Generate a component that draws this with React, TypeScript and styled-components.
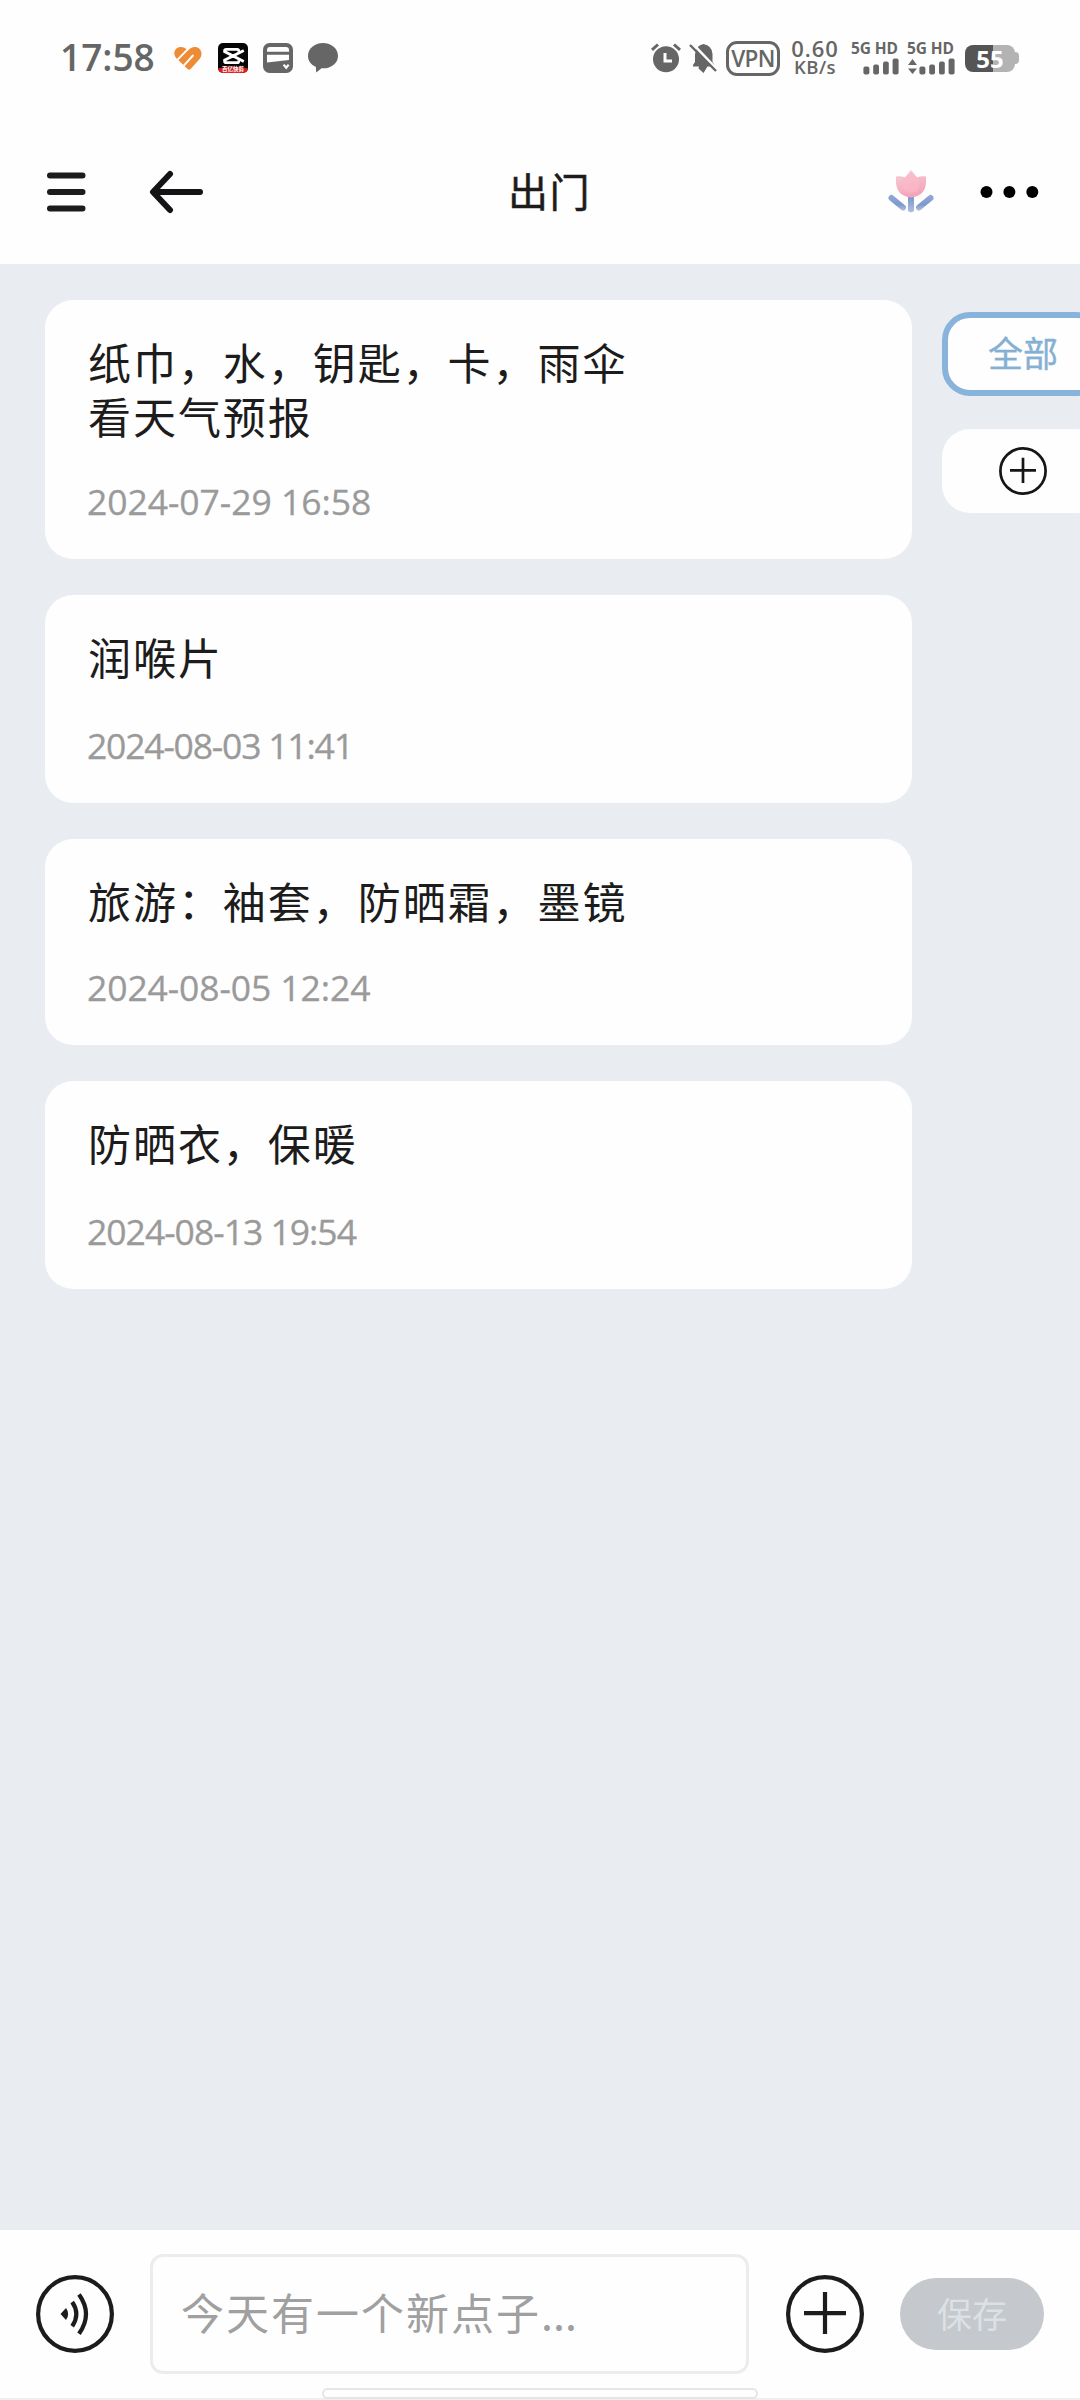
import React from 'react';
import styled, { createGlobalStyle } from 'styled-components';

const cjk = `"Noto Sans CJK SC", sans-serif`;
const latin = `"Open Sans", "Noto Sans CJK SC", sans-serif`;
const ink = '#1c1c1c';
const statusGray = '#666666';

const GlobalStyle = createGlobalStyle`
  * { box-sizing: border-box; }
  body { margin: 0; background: #fefefe; font-family: ${cjk}; }
  svg { display: block; flex: none; }
`;

const Screen = styled.div`
  width: 1080px;
  height: 2400px;
  display: flex;
  flex-direction: column;
  overflow: hidden;
  background: #fefefe;
`;

/* status bar */
const StatusBar = styled.div`
  height: 120px;
  padding: 0 61px 4px 60px;
  display: flex;
  align-items: center;
  justify-content: space-between;
  color: ${statusGray};
  font-family: ${latin};
`;

const StatusGroup = styled.div<{ $gap: number }>`
  display: flex;
  align-items: center;
  gap: ${(p) => p.$gap}px;
`;

const Clock = styled.span`
  width: 98px;
  padding-bottom: 3px;
  font-size: 37px;
  line-height: 40px;
  font-weight: 600;
  letter-spacing: 0;
  white-space: nowrap;
`;

const Vpn = styled.span`
  width: 54px;
  height: 35px;
  margin: 1px 10px 0 9px;
  border: 3px solid ${statusGray};
  border-radius: 11px;
  display: flex;
  align-items: center;
  justify-content: center;
  font-size: 22.5px;
  font-weight: 600;
  letter-spacing: -0.6px;
`;

const Speed = styled.div`
  width: 50px;
  margin-right: 11px;
  padding-bottom: 4px;
  display: flex;
  flex-direction: column;
  align-items: center;
  font-weight: 600;
`;

const SpeedValue = styled.span`
  font-size: 22px;
  line-height: 20px;
  letter-spacing: 0.9px;
`;

const SpeedUnit = styled.span`
  font-size: 18.5px;
  line-height: 17px;
  letter-spacing: 0.5px;
`;

const Sim = styled.div`
  width: 48px;
  margin: 0 8px 0 0;
  display: flex;
  flex-direction: column;
  align-items: flex-end;
  gap: 3px;
`;

const SimLabel = styled.span`
  width: 48px;
  font-size: 15.5px;
  line-height: 14px;
  font-weight: 700;
  letter-spacing: -0.1px;
  white-space: nowrap;
`;

const Battery = styled.div`
  display: flex;
  align-items: center;
  margin-left: 2px;
`;

const BatteryBody = styled.div`
  width: 50px;
  height: 27px;
  border-radius: 8px;
  background: linear-gradient(90deg, #555 55%, #b3b3b3 55%);
  color: #fff;
  font-size: 24px;
  line-height: 27px;
  font-weight: 700;
  text-align: center;
`;

const BatteryTip = styled.div`
  width: 4px;
  height: 12px;
  border-radius: 0 4px 4px 0;
  background: #b3b3b3;
`;

/* title bar */
const TitleBar = styled.header`
  height: 144px;
  padding: 0 41px 0 46px;
  display: grid;
  grid-template-columns: 1fr auto 1fr;
  align-items: center;
`;

const Side = styled.div<{ $gap: number; $end?: boolean }>`
  display: flex;
  align-items: center;
  gap: ${(p) => p.$gap}px;
  justify-content: ${(p) => (p.$end ? 'flex-end' : 'flex-start')};
`;

const Title = styled.h1`
  margin: 0 0 4px 14px;
  font-size: 40px;
  line-height: 60px;
  font-weight: 400;
  letter-spacing: 1.5px;
  color: ${ink};
  -webkit-text-stroke: 0.5px ${ink};
`;

/* notes */
const Content = styled.main`
  flex: 1;
  padding: 36px 0 0 45px;
  display: flex;
  align-items: flex-start;
  gap: 30px;
  overflow: hidden;
  background: #e9edf1;
`;

const NoteList = styled.section`
  width: 867px;
  flex: none;
  display: flex;
  flex-direction: column;
  gap: 36px;
`;

const Note = styled.article<{ $height: number }>`
  height: ${(p) => p.$height}px;
  padding: 34px 43px 34px;
  border-radius: 28px;
  background: #fefefe;
  display: flex;
  flex-direction: column;
  justify-content: space-between;
`;

const NoteText = styled.p`
  margin: 0;
  font-size: 43px;
  line-height: 54px;
  letter-spacing: 1.95px;
  white-space: pre-line;
  color: ${ink};
`;

const NoteDate = styled.time<{ $spacing: number }>`
  font-family: ${latin};
  margin-left: -1px;
  font-size: 35.5px;
  line-height: 48px;
  letter-spacing: ${(p) => p.$spacing}px;
  color: #9a9a9a;
  -webkit-text-stroke: 0.3px #9a9a9a;
`;

const Tags = styled.aside`
  width: 162px;
  flex: none;
  margin-top: 12px;
  display: flex;
  flex-direction: column;
  gap: 33px;
`;

const Tag = styled.button<{ $active?: boolean }>`
  height: 84px;
  padding: ${(p) => (p.$active ? '0 0 5px' : '0')};
  border: ${(p) => (p.$active ? '6px solid #88b4dc' : '0')};
  border-radius: 28px;
  background: #fefefe;
  display: flex;
  align-items: center;
  justify-content: center;
  font-family: ${cjk};
  font-size: 35px;
  color: #85b0d3;
  -webkit-text-stroke: 0.4px #85b0d3;
`;

/* composer */
const Composer = styled.footer`
  position: relative;
  height: 170px;
  padding: 24px 36px 0;
  border-bottom: 2px solid #eeeeee;
  display: flex;
  align-items: flex-start;
  background: #fefefe;
`;

const RoundButton = styled.button`
  width: 78px;
  height: 78px;
  margin-top: 21px;
  padding: 0;
  border: 0;
  background: none;
`;

const Field = styled.div`
  width: 599px;
  height: 120px;
  margin: 0 37px 0 36px;
  padding: 0 28px 6px;
  border: 3px solid #ececec;
  border-radius: 13px;
  display: flex;
  align-items: center;
  font-size: 43px;
  letter-spacing: 2px;
  color: #a0a0a0;
`;

const Dots = styled.span`
  letter-spacing: 0.1px;
`;

const Save = styled.button`
  width: 144px;
  height: 72px;
  margin: 24px 0 0 36px;
  padding: 0 0 4px;
  border: 0;
  border-radius: 36px;
  background: #c5c8cc;
  color: #dce1e6;
  font-family: ${cjk};
  font-size: 35px;
`;

const HomeHandle = styled.div`
  position: absolute;
  left: 322px;
  bottom: -1px;
  width: 436px;
  height: 11px;
  border: 2px solid #e6e6e6;
  border-radius: 6px;
  background: #fefefe;
`;

const HeartIcon = () => (
  <svg width="30" height="25" viewBox="0 0 30 25" fill="none">
    <path d="M15 4.6 C18 0.4 23.6 0 26.6 3 C29.4 6 29 10.2 26.4 13.2 L17.6 23 Q16.2 24.6 14.6 23 L3.6 12.4 C0.6 9.2 0.6 5.4 3.2 2.8 C6.2 0 11.8 0.4 15 4.6Z" fill="#ee8b35" />
    <path d="M4.6 13.6 L15.6 2.4 M10.8 19.6 L20.4 9" stroke="#fefefe" strokeWidth="2" />
  </svg>
);

const BadgeText = styled.text`
  font-family: ${cjk};
  font-size: 5.5px;
  font-weight: 700;
`;

const CutIcon = () => (
  <svg width="30" height="30" viewBox="0 0 30 30">
    <defs>
      <clipPath id="cut"><rect width="30" height="30" rx="5" /></clipPath>
    </defs>
    <g clipPath="url(#cut)">
      <rect width="30" height="30" fill="#050505" />
      <path d="M20.6 8.4 V7.6 Q20.6 6.4 19.2 6.4 H8.2 Q6.6 6.4 6.6 7.8 V8.6 L25.8 18.4 M25.8 7.4 L6.6 17.2 V18.2 Q6.6 19.6 8.2 19.6 H19.2 Q20.6 19.6 20.6 18.4 V17.6" fill="none" stroke="#fff" strokeWidth="2.8" />
      <path d="M0 25.4 Q15 21.5 30 25.4 V30 H0Z" fill="#dd1c1c" />
      <BadgeText x="15" y="28.4" textAnchor="middle" fill="#fff">百亿快剪</BadgeText>
    </g>
  </svg>
);

const CardIcon = () => (
  <svg width="30" height="30" viewBox="0 0 30 30">
    <rect width="30" height="30" rx="6.5" fill={statusGray} />
    <path d="M4 8.8 V7 Q4 4 7 4 H23 Q26 4 26 7 V8.8Z M4 11.8 H26 V17 L4 19.5Z" fill="#fefefe" />
    <path d="M20.6 21.6 L23.2 24.8 L25.6 21.6" fill="none" stroke="#fefefe" strokeWidth="2.2" />
  </svg>
);

const ChatIcon = () => (
  <svg width="30" height="30" viewBox="0 0 30 30" fill={statusGray}>
    <path d="M15 0 C23.4 0 30 5.6 30 12.9 C30 20 23.5 25.3 15 25.3 L13.6 25.2 L8.2 29.5 L7.8 23.8 C3 21.6 0 17.6 0 12.9 C0 5.6 6.6 0 15 0Z" />
  </svg>
);

const AlarmIcon = () => (
  <svg width="30" height="30" viewBox="0 0 30 30" fill="none">
    <circle cx="15" cy="16.3" r="13" fill={statusGray} />
    <path d="M1 6.8 L7 1.5 M23 1.5 L29 6.8" stroke={statusGray} strokeWidth="3" />
    <path d="M14 10 V18 H21" stroke="#fefefe" strokeWidth="3" />
  </svg>
);

const MuteIcon = () => (
  <svg width="28" height="31" viewBox="0 0 28 31" fill="none">
    <path d="M4 23.5 V22 L6 19 V11.5 Q6.5 2.5 14.5 1 Q23 2.5 23.5 11 V19 L25.5 22 V23.5 H18.5 L14.5 30 L9.5 25.5 L10 23.5Z" fill={statusGray} />
    <path d="M3.5 0.5 L29 27.5" stroke="#fefefe" strokeWidth="2.6" />
    <path d="M1 2 L27 28" stroke={statusGray} strokeWidth="2.4" />
  </svg>
);

const SignalIcon = ({ arrows = false }: { arrows?: boolean }) => (
  <svg width="48" height="17" viewBox="0 0 48 17" fill={statusGray}>
    {arrows && <path d="M5.5 1 L10 7 H1Z M5.5 16 L1 10.5 H10Z" />}
    <rect x="12.4" y="8.5" width="6" height="8" rx="2" />
    <rect x="22.2" y="6.5" width="5.8" height="10" rx="2" />
    <rect x="32" y="3.4" width="5.8" height="13.1" rx="2" />
    <rect x="41.6" y="0.6" width="6" height="15.9" rx="2" />
  </svg>
);

const MenuIcon = () => (
  <svg width="40" height="42" viewBox="0 0 40 42" stroke={ink} strokeWidth="6" strokeLinecap="round">
    <path d="M4 4.5 H36.5 M4 21 H36.5 M4 37.5 H36.5" />
  </svg>
);

const BackIcon = () => (
  <svg width="56" height="44" viewBox="0 0 56 44" fill="none" stroke="#141416" strokeWidth="6" strokeLinecap="round" strokeLinejoin="round">
    <path d="M22 4 L5 22 L22 40 M6 22 H52" />
  </svg>
);

const TulipIcon = () => (
  <svg width="48" height="46" viewBox="0 0 48 46">
    <defs>
      <linearGradient id="petal" x1="0" y1="0" x2="0.3" y2="1">
        <stop offset="0" stopColor="#f6d0d8" />
        <stop offset="1" stopColor="#f4a5b8" />
      </linearGradient>
      <linearGradient id="stem" x1="0" y1="0" x2="0" y2="1">
        <stop offset="0" stopColor="#6f8fca" />
        <stop offset="1" stopColor="#b1bfe0" />
      </linearGradient>
      <linearGradient id="leaf" x1="0" y1="26" x2="0" y2="42" gradientUnits="userSpaceOnUse">
        <stop offset="0" stopColor="#92a9d8" />
        <stop offset="0.6" stopColor="#7f98cc" />
        <stop offset="1" stopColor="#b4c3e4" />
      </linearGradient>
    </defs>
    <path d="M21 25 H27 V42 Q24 44.5 21 42Z" fill="url(#stem)" />
    <path d="M4.5 29 L16 38.5 M43.5 29 L32 38.5" fill="none" stroke="url(#leaf)" strokeWidth="6" strokeLinecap="round" />
    <path d="M9 7.5 Q14 6.5 18 8.5 L24 1 L30 8.5 Q34 6.5 39 7.5 V14 Q38 27 24 28.5 Q10 27 9 14Z" fill="url(#petal)" />
    <path d="M24 3 L31 9 Q34 14 31 21 Q28 24 24 24 Q20 24 17 21 Q14 14 17 9Z" fill="#fbb9ca" opacity="0.65" />
  </svg>
);

const MoreIcon = () => (
  <svg width="60" height="14" viewBox="0 0 60 14">
    <circle cx="7.5" cy="7" r="6" />
    <circle cx="30.4" cy="7" r="6" />
    <circle cx="53.3" cy="7" r="6" />
  </svg>
);

const TagPlusIcon = () => (
  <svg width="48" height="48" viewBox="0 0 48 48" fill="none" stroke="#161616" strokeWidth="2.7">
    <circle cx="24" cy="24" r="22.6" />
    <path d="M24 10.8 V36 M11 23.4 H37" />
  </svg>
);

const VoiceIcon = () => (
  <svg width="78" height="78" viewBox="0 0 78 78" fill="none" stroke={ink} strokeWidth="4.2">
    <circle cx="39" cy="39" r="36.9" />
    <path d="M24.5 39 L30 33 Q34.3 39 30 45Z" fill={ink} stroke="none" />
    <path d="M36.2 27 Q44.5 39 36.2 51.2 M43 19.5 Q57 39 43 58.8" />
  </svg>
);

const AddIcon = () => (
  <svg width="78" height="78" viewBox="0 0 78 78" fill="none" stroke={ink} strokeWidth="4.2">
    <circle cx="39" cy="39" r="36.9" />
    <path d="M39 17 V59 M18 38.2 H60" />
  </svg>
);

const notes = [
  { text: '纸巾，水，钥匙，卡，雨伞\n看天气预报', date: '2024-07-29 16:58', height: 259, spacing: -0.05 },
  { text: '润喉片', date: '2024-08-03 11:41', height: 208, spacing: -1.2 },
  { text: '旅游：袖套，防晒霜，墨镜', date: '2024-08-05 12:24', height: 206, spacing: -0.1 },
  { text: '防晒衣，保暖', date: '2024-08-13 19:54', height: 208, spacing: -1.0 },
];

export default function App() {
  return (
    <Screen>
      <GlobalStyle />
      <StatusBar>
        <StatusGroup $gap={15}>
          <Clock>17:58</Clock>
          <HeartIcon />
          <CutIcon />
          <CardIcon />
          <ChatIcon />
        </StatusGroup>
        <StatusGroup $gap={0}>
          <StatusGroup $gap={8}>
            <AlarmIcon />
            <MuteIcon />
          </StatusGroup>
          <Vpn>VPN</Vpn>
          <Speed>
            <SpeedValue>0.60</SpeedValue>
            <SpeedUnit>KB/s</SpeedUnit>
          </Speed>
          <Sim>
            <SimLabel>5G HD</SimLabel>
            <SignalIcon />
          </Sim>
          <Sim>
            <SimLabel>5G HD</SimLabel>
            <SignalIcon arrows />
          </Sim>
          <Battery>
            <BatteryBody>55</BatteryBody>
            <BatteryTip />
          </Battery>
        </StatusGroup>
      </StatusBar>
      <TitleBar>
        <Side $gap={62}>
          <MenuIcon />
          <BackIcon />
        </Side>
        <Title>出门</Title>
        <Side $gap={44} $end>
          <TulipIcon />
          <MoreIcon />
        </Side>
      </TitleBar>
      <Content>
        <NoteList>
          {notes.map((n) => (
            <Note key={n.date} $height={n.height}>
              <NoteText>{n.text}</NoteText>
              <NoteDate $spacing={n.spacing}>{n.date}</NoteDate>
            </Note>
          ))}
        </NoteList>
        <Tags>
          <Tag $active>全部</Tag>
          <Tag><TagPlusIcon /></Tag>
        </Tags>
      </Content>
      <Composer>
        <RoundButton><VoiceIcon /></RoundButton>
        <Field>今天有一个新点子<Dots>...</Dots></Field>
        <RoundButton><AddIcon /></RoundButton>
        <Save>保存</Save>
        <HomeHandle />
      </Composer>
    </Screen>
  );
}
